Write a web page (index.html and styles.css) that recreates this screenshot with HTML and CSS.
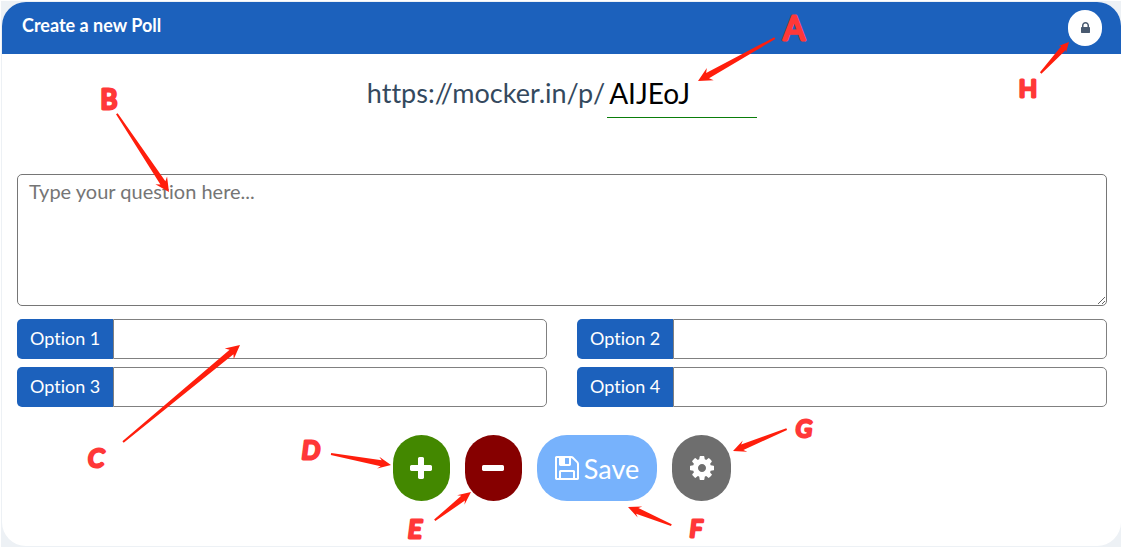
FILE: index.html
```html
<!DOCTYPE html>
<html lang="en">
<head>
<meta charset="utf-8">
<meta name="viewport" content="width=device-width, initial-scale=1">
<title>Create a new Poll</title>
<link rel="stylesheet" href="styles.css">
</head>
<body>
<main class="page">
  <form class="card">
    <header class="card-header">
      <h1 class="title">Create a new Poll</h1>
      <button class="lock-btn" type="button" aria-label="Lock poll">
        <svg class="icon-lock" viewBox="320 128 1152 1408" aria-hidden="true"><path d="M640 768h512v-192q0-106-75-181t-181-75-181 75-75 181v192zm832 96v576q0 40-28 68t-68 28h-960q-40 0-68-28t-28-68v-576q0-40 28-68t68-28h32v-192q0-184 132-316t316-132 316 132 132 316v192h32q40 0 68 28t28 68z"/></svg>
      </button>
    </header>
    <div class="card-body">
      <div class="url-row">
        <label for="slug">https://mocker.in/p/</label>
        <input class="slug" id="slug" type="text" value="AIJEoJ">
      </div>
      <textarea class="question" aria-label="Question" placeholder="Type your question here..."></textarea>
      <div class="options">
        <div class="option"><label for="o1">Option 1</label><input id="o1" type="text"></div>
        <div class="option"><label for="o2">Option 2</label><input id="o2" type="text"></div>
        <div class="option"><label for="o3">Option 3</label><input id="o3" type="text"></div>
        <div class="option"><label for="o4">Option 4</label><input id="o4" type="text"></div>
      </div>
      <div class="actions">
        <button class="btn btn-add" type="button" aria-label="Add option">
          <svg class="icon-sign" viewBox="192 128 1408 1408" aria-hidden="true"><path d="M1600 736v192q0 40-28 68t-68 28h-416v416q0 40-28 68t-68 28h-192q-40 0-68-28t-28-68v-416h-416q-40 0-68-28t-28-68v-192q0-40 28-68t68-28h416v-416q0-40 28-68t68-28h192q40 0 68 28t28 68v416h416q40 0 68 28t28 68z"/></svg>
        </button>
        <button class="btn btn-remove" type="button" aria-label="Remove option">
          <svg class="icon-sign" viewBox="192 128 1408 1408" aria-hidden="true"><path d="M1600 736v192q0 40-28 68t-68 28h-1216q-40 0-68-28t-28-68v-192q0-40 28-68t68-28h1216q40 0 68 28t28 68z"/></svg>
        </button>
        <button class="btn btn-save" type="button">
          <svg class="icon" viewBox="128 128 1536 1536" aria-hidden="true"><path d="M512 1536h768v-384h-768v384zm896 0h128v-896q0-14-10-38.5t-20-34.5l-281-281q-10-10-34-20t-39-10v416q0 40-28 68t-68 28h-576q-40 0-68-28t-28-68v-416h-128v1280h128v-416q0-40 28-68t68-28h832q40 0 68 28t28 68v416zm-384-928v-320q0-13-9.5-22.5t-22.5-9.5h-192q-13 0-22.5 9.5t-9.5 22.5v320q0 13 9.5 22.5t22.5 9.5h192q13 0 22.5-9.5t9.5-22.5zm640 32v928q0 40-28 68t-68 28h-1344q-40 0-68-28t-28-68v-1344q0-40 28-68t68-28h928q40 0 88 20t76 48l280 280q28 28 48 76t20 88z"/></svg>
          <span>Save</span>
        </button>
        <button class="btn btn-settings" type="button" aria-label="Settings">
          <svg class="icon" viewBox="128 128 1536 1536" aria-hidden="true"><path d="M1152 896q0-106-75-181t-181-75-181 75-75 181 75 181 181 75 181-75 75-181zm512-109v222q0 12-8 23t-20 13l-185 28q-19 54-39 91 35 50 107 138 10 12 10 25t-9 23q-27 37-99 108t-94 71q-12 0-26-9l-138-108q-44 23-91 38-16 136-29 186-7 28-36 28h-222q-14 0-24.5-8.5t-11.5-21.5l-28-184q-49-16-90-37l-141 107q-10 9-25 9-14 0-25-11-126-114-165-168-7-10-7-23 0-12 8-23 15-21 51-66.5t54-70.5q-27-50-41-99l-183-27q-13-2-21-12.5t-8-23.5v-222q0-12 8-23t19-13l186-28q14-46 39-92-40-57-107-138-10-12-10-24 0-10 9-23 26-36 98.5-107.5t94.5-71.5q13 0 26 10l138 107q44-23 91-38 16-136 29-186 7-28 36-28h222q14 0 24.5 8.5t11.5 21.5l28 184q49 16 90 37l142-107q9-9 24-9 13 0 25 10 129 119 165 170 7 8 7 22 0 12-8 23-15 21-51 66.5t-54 70.5q26 50 41 98l183 28q13 2 21 12.5t8 23.5z"/></svg>
        </button>
      </div>
    </div>
  </form>
  <!-- Lettered callouts over the form; each arrow is drawn pointing right with its tip at 0,0 -->
  <svg class="callouts" viewBox="0 0 1121 547">
    <g class="arrows">
      <polygon transform="translate(698 81) rotate(150.8)" points="0,0 -14,-7 -11,-3 -88,-1 -88,1 -11,3 -14,7"/>
      <polygon transform="translate(169 192) rotate(56.3)" points="0,0 -14,-7 -11,-3 -94,-1 -94,1 -11,3 -14,7"/>
      <polygon transform="translate(240 345) rotate(-39.7)" points="0,0 -14,-7 -11,-3 -152,-1 -152,1 -11,3 -14,7"/>
      <polygon transform="translate(391 465) rotate(10.4)" points="0,0 -13,-6 -10,-3 -61,-1 -61,1 -10,3 -13,6"/>
      <polygon transform="translate(471 492) rotate(-38)" points="0,0 -13,-6 -10,-3 -46,-1 -46,1 -10,3 -13,6"/>
      <polygon transform="translate(628 507) rotate(202.7)" points="0,0 -13,-6 -10,-3 -47,-1 -47,1 -10,3 -13,6"/>
      <polygon transform="translate(733 451) rotate(157.8)" points="0,0 -13,-6 -10,-3 -58,-1 -58,1 -10,3 -13,6"/>
      <polygon transform="translate(1069 42) rotate(-47.6)" points="0,0 -10,-5 -8,-3 -42,-1 -42,1 -8,3 -10,5"/>
    </g>
    <g class="letters">
      <text class="large" x="794" y="40">A</text>
      <text x="109" y="109">B</text>
      <text class="slanted" x="96" y="467">C</text>
      <text class="slanted" x="311" y="459">D</text>
      <text class="slanted" x="415" y="538">E</text>
      <text class="small slanted" x="696" y="537">F</text>
      <text class="small slanted" x="804" y="437">G</text>
      <text class="small" x="1028" y="97">H</text>
    </g>
  </svg>
</main>
</body>
</html>
```
FILE: styles.css
```css
* {
  box-sizing: border-box;
}

body {
  margin: 0;
  background: #fff;
  font-family: Lato, "Liberation Sans", sans-serif;
  font-size: 18px;
  font-variant-ligatures: none;
}

button,
input,
textarea {
  font-family: inherit;
  font-variant-ligatures: none;
}

.page {
  position: relative;
  margin: 1px 0 0 1px;
  padding: 1px 0 1px 1px;
  background: #edf1f5;
}

.card {
  overflow: hidden;
  border-radius: 24px;
  background: #fff;
}

.card-header {
  display: flex;
  align-items: flex-start;
  justify-content: space-between;
  padding: 8px 19px 8px 20px;
  background: #1c61bc;
}

.title {
  margin: 0;
  padding-top: 2px;
  color: #fff;
  font-size: 18px;
  font-weight: 700;
  line-height: 26px;
}

.lock-btn {
  display: flex;
  align-items: center;
  justify-content: center;
  width: 34px;
  height: 36px;
  padding: 0 0 2px;
  border: 0;
  border-radius: 17px;
  background: #fff;
}

.icon-lock {
  width: 9px;
  height: 11px;
  fill: #495a70;
}

.card-body {
  padding: 20px 14px 45px 15px;
}

.url-row {
  display: flex;
  align-items: flex-start;
  justify-content: center;
  gap: 2px;
  margin-bottom: 56px;
  color: #34495e;
  font-size: 27px;
  line-height: 38px;
}

.slug {
  width: 150px;
  height: 44px;
  padding: 0 2px 6px;
  border: 0;
  border-bottom: 1px solid #0a7d0a;
  outline: 0;
  background: transparent;
  color: #000;
  font-size: 28px;
}

.question {
  display: block;
  width: 100%;
  height: 132px;
  padding: 4px 11px;
  border: 1px solid #767676;
  border-radius: 5px;
  font-size: 20px;
  line-height: 24px;
}

.question::placeholder {
  color: #757575;
}

.options {
  display: grid;
  grid-template-columns: 1fr 1fr;
  gap: 8px 30px;
  margin: 13px 0 28px;
}

.option {
  display: flex;
  height: 40px;
}

.option label {
  padding: 0 13px;
  border-radius: 5px 0 0 5px;
  background: #1c61bc;
  color: #fff;
  line-height: 38px;
  white-space: nowrap;
}

.option input {
  flex: 1;
  min-width: 0;
  padding: 0 12px;
  border: 1px solid #808080;
  border-radius: 0 5px 5px 0;
  font-size: 18px;
}

.actions {
  display: flex;
  justify-content: center;
  gap: 15px;
}

.btn {
  display: flex;
  align-items: center;
  justify-content: center;
  gap: 5px;
  min-width: 57px;
  height: 66px;
  padding: 0 17px;
  border: 0;
  border-radius: 30px;
  color: #fff;
  font-size: 27px;
}

.btn-add {
  background: #438800;
}

.btn-remove {
  background: #860000;
}

.btn-save {
  padding: 0 18px;
  background: #77b2fc;
}

.btn-settings {
  min-width: 59px;
  background: #6e6e6e;
}

.icon,
.icon-sign {
  width: 24px;
  height: 24px;
  fill: #fff;
}

.icon-sign {
  width: 22px;
  height: 22px;
}

.callouts {
  position: absolute;
  top: -1px;
  left: -1px;
  width: calc(100% + 1px);
  pointer-events: none;
}

.arrows {
  fill: #ff1e0c;
}

.letters {
  fill: #ff3838;
  stroke: #ff3838;
  stroke-width: 3px;
  stroke-linejoin: round;
  font-family: Lato, "Liberation Sans", sans-serif;
  font-size: 26px;
  font-weight: 400;
  text-anchor: middle;
}

.letters .large {
  font-size: 32px;
}

.letters .small {
  font-size: 24px;
}

.letters .slanted {
  font-style: italic;
}
```
